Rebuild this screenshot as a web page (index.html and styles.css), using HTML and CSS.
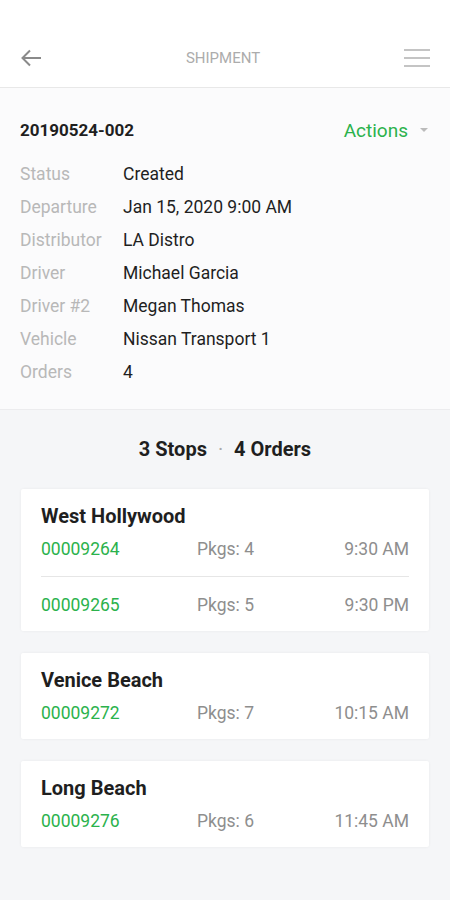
FILE: index.html
```html
<!DOCTYPE html>
<html lang="en">
<head>
    <meta charset="UTF-8">
    <meta name="viewport" content="width=device-width, initial-scale=1.0">
    <title>Shipment</title>
    <link rel="stylesheet" href="styles.css">
</head>
<body>
    <!-- Cabeçalho -->
    <div class="topbar">
        <svg class="icon" width="24" height="24" viewBox="0 0 24 24">
            <path d="M22 12H3.5M11 4.5L3.5 12l7.5 7.5" fill="none" stroke="#8a8a8a" stroke-width="2"/>
        </svg>
        <div class="title">SHIPMENT</div>
        <svg class="icon" width="28" height="24" viewBox="0 0 28 24">
            <path d="M1 4h26M1 12h26M1 20h26" stroke="#c4c4c4" stroke-width="2"/>
        </svg>
    </div>

    <!-- Detalhes do envio -->
    <div class="details">
        <div class="details-head">
            <div class="ship-id">20190524-002</div>
            <div class="actions">Actions <span class="caret"></span></div>
        </div>
        <div class="info-row"><span class="label">Status</span><span>Created</span></div>
        <div class="info-row"><span class="label">Departure</span><span>Jan 15, 2020 9:00 AM</span></div>
        <div class="info-row"><span class="label">Distributor</span><span>LA Distro</span></div>
        <div class="info-row"><span class="label">Driver</span><span>Michael Garcia</span></div>
        <div class="info-row"><span class="label">Driver #2</span><span>Megan Thomas</span></div>
        <div class="info-row"><span class="label">Vehicle</span><span>Nissan Transport 1</span></div>
        <div class="info-row"><span class="label">Orders</span><span>4</span></div>
    </div>

    <!-- Paradas -->
    <div class="stops">
        <div class="summary">3 Stops <span class="dot">·</span> 4 Orders</div>

        <div class="stop-card">
            <h3>West Hollywood</h3>
            <div class="order-row">
                <span class="order-no">00009264</span><span class="muted">Pkgs: 4</span><span class="muted">9:30 AM</span>
            </div>
            <div class="order-row">
                <span class="order-no">00009265</span><span class="muted">Pkgs: 5</span><span class="muted">9:30 PM</span>
            </div>
        </div>

        <div class="stop-card">
            <h3>Venice Beach</h3>
            <div class="order-row">
                <span class="order-no">00009272</span><span class="muted">Pkgs: 7</span><span class="muted">10:15 AM</span>
            </div>
        </div>

        <div class="stop-card">
            <h3>Long Beach</h3>
            <div class="order-row">
                <span class="order-no">00009276</span><span class="muted">Pkgs: 6</span><span class="muted">11:45 AM</span>
            </div>
        </div>
    </div>
</body>
</html>
```

FILE: styles.css
```css
* {
    margin: 0;
    padding: 0;
    box-sizing: border-box;
    font-family: Roboto, "Liberation Sans", sans-serif;
}

body {
    background-color: #f5f6f8;
    color: #1f1f1f;
}

/* Cabeçalho */
.topbar {
    background: white;
    height: 88px;
    padding: 28px 19px 0 19px;
    display: flex;
    justify-content: space-between;
    align-items: center;
    border-bottom: 1px solid #e8e8e8;
}

.topbar .icon {
    display: block;
}

.title {
    font-size: 15px;
    color: #acacac;
    line-height: 24px;
}

/* Detalhes */
.details {
    background: #fbfbfc;
    padding: 31px 20px 20px 20px;
    border-bottom: 1px solid #ececee;
}

.details-head {
    display: flex;
    justify-content: space-between;
    align-items: center;
    height: 22px;
    margin-bottom: 17px;
}

.ship-id {
    font-size: 17px;
    font-weight: bold;
}

.actions {
    font-size: 19px;
    color: #2bb24c;
    display: flex;
    align-items: center;
}

.caret {
    width: 0;
    height: 0;
    border-left: 4px solid transparent;
    border-right: 4px solid transparent;
    border-top: 4px solid #bbb;
    margin-left: 12px;
    margin-right: 2px;
}

.info-row {
    display: flex;
    font-size: 17.5px;
    line-height: 33px;
}

.info-row .label {
    width: 103px;
    color: #b8b8b8;
}

/* Paradas */
.stops {
    padding: 27px 21px 40px 21px;
}

.summary {
    text-align: center;
    font-size: 20px;
    font-weight: bold;
    line-height: 24px;
    margin-bottom: 28px;
}

.summary .dot {
    color: #aaa;
    font-weight: normal;
    margin: 0 6px;
}

.stop-card {
    background: white;
    border-radius: 2px;
    box-shadow: 0 0 3px rgba(0,0,0,0.06);
    padding: 16px 20px 3px 20px;
    margin-bottom: 22px;
}

.stop-card h3 {
    font-size: 20px;
    line-height: 22px;
    margin-bottom: 11px;
}

.order-row {
    display: grid;
    grid-template-columns: 156px 1fr auto;
    font-size: 17.5px;
    line-height: 22px;
    padding: 0 0 12px 0;
}

.order-row + .order-row {
    border-top: 1px solid #e6e6e6;
    padding-top: 17px;
    margin-top: 4px;
}

.order-no {
    color: #2bb24c;
}

.muted {
    color: #8e8e8e;
}
```
